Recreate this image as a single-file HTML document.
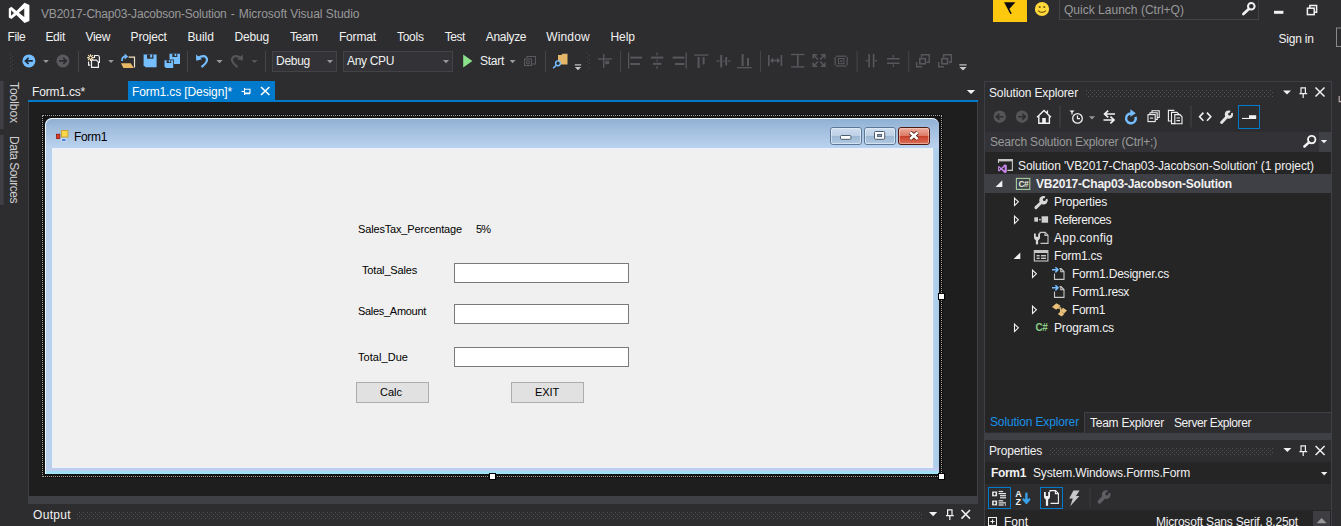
<!DOCTYPE html>
<html lang="en">
<head>
<meta charset="utf-8">
<title>VB2017-Chap03-Jacobson-Solution - Microsoft Visual Studio</title>
<style>
html,body{margin:0;padding:0;}
body{width:1341px;height:526px;overflow:hidden;background:#2d2d30;position:relative;font-family:'Liberation Sans',sans-serif;}
.a{position:absolute;}
.t{position:absolute;white-space:pre;font-family:'Liberation Sans',sans-serif;}
.grip{position:absolute;height:5px;background-image:radial-gradient(circle at 0.5px 0.5px,#505055 0.6px,transparent 0.7px),radial-gradient(circle at 2.5px 2.5px,#505055 0.6px,transparent 0.7px);background-size:4px 4px;}
svg{position:absolute;overflow:visible;}
.vt{position:absolute;white-space:pre;font-size:12px;line-height:16px;color:#d0d0d0;transform-origin:0 0;transform:rotate(90deg);}
</style>
</head>
<body>
<!-- ===== document well ===== -->
<div class="a" style="left:28px;top:100px;width:950px;height:2px;background:#007acc"></div>
<div class="a" style="left:28px;top:102px;width:950px;height:394px;background:#3f3f46"></div>
<div class="a" style="left:29px;top:102px;width:948px;height:394px;background:#1e1e1e"></div>
<div class="a" style="left:28px;top:496px;width:950px;height:8px;background:#3f3f46"></div>
<!-- active tab -->
<div class="a" style="left:128px;top:81px;width:147px;height:19px;background:#007acc"></div>

<!-- left autohide strips -->
<div class="a" style="left:0;top:81px;width:3px;height:48px;background:#3f3f46;border-right:1px solid #38383d"></div>
<div class="a" style="left:0;top:135px;width:3px;height:70px;background:#3f3f46;border-right:1px solid #38383d"></div>
<span class="vt" style="left:22px;top:82.3px;letter-spacing:-0.054px">Toolbox</span>
<span class="vt" style="left:22px;top:135.6px;letter-spacing:-0.475px">Data Sources</span>


<!-- ===== form designer ===== -->
<div class="a" id="selbg" style="left:41px;top:114px;width:902px;height:364px;background:#131313"></div>
<div class="a" id="sel" style="left:42px;top:115px;width:898px;height:360px;border:1px dotted #a6a6a6"></div>
<div class="a" id="win" style="left:45px;top:118px;width:894px;height:356px;border-radius:7px 7px 0 0;overflow:hidden;background:#b9d1ea;">
  <div class="a" style="left:0;top:0;width:894px;height:30px;background:linear-gradient(#8eafd2 0px,#93b3d5 3px,#a3bfde 12px,#adc7e5 20px,#b7d0ee 28px,#bdd4f0 30px)"></div>
  <div class="a" style="left:887px;top:30px;width:7px;height:326px;background:linear-gradient(90deg,#d3e3f3 0,#b3cfe9 2px,#a8cdea 7px)"></div>
  <div class="a" style="left:0;top:349px;width:894px;height:5px;background:#bfcdf0"></div>
  <div class="a" style="left:0;top:353px;width:894px;height:3px;background:#9fe0f4"></div>
  <div class="a" style="left:0;top:0;width:894px;height:356px;box-sizing:border-box;border-radius:7px 7px 0 0;border-top:1px solid #f6fafd;border-left:1px solid #eef5fc;"></div>
</div>
<div class="a" id="clientedge" style="left:51.5px;top:147.5px;width:881.5px;height:320px;background:#eaf3fb"></div>
<div class="a" id="client" style="left:53px;top:149px;width:879px;height:317.5px;background:#f0f0f0"></div>
<!-- textboxes -->
<div class="a" style="left:454px;top:263px;width:173px;height:18px;background:#fff;border:1px solid #7a7a7a"></div>
<div class="a" style="left:454px;top:304px;width:173px;height:18px;background:#fff;border:1px solid #7a7a7a"></div>
<div class="a" style="left:454px;top:347px;width:173px;height:18px;background:#fff;border:1px solid #7a7a7a"></div>
<!-- buttons -->
<div class="a" style="left:356px;top:382px;width:71px;height:19px;background:#e1e1e1;border:1px solid #adadad"></div>
<div class="a" style="left:511px;top:382px;width:71px;height:19px;background:#e1e1e1;border:1px solid #adadad"></div>
<!-- handles -->
<div class="a" style="left:938px;top:293px;width:5px;height:5px;background:#fff;border:1px solid #000"></div>
<div class="a" style="left:489px;top:473px;width:5px;height:5px;background:#fff;border:1px solid #000"></div>
<div class="a" style="left:938px;top:473px;width:5px;height:5px;background:#fff;border:1px solid #000"></div>

<!-- ===== output panel ===== -->

<!-- ===== top right ===== -->
<div class="a" style="left:993px;top:0;width:34px;height:22px;background:#fdc80e"></div>
<div class="a" style="left:1059px;top:-1px;width:198px;height:19px;background:#2d2d30;border:1px solid #434346"></div>

<!-- toolbar combos -->
<div class="a" style="left:272px;top:51px;width:63px;height:19px;border:1px solid #434346;background:#333337"></div>
<div class="a" style="left:343px;top:51px;width:108px;height:19px;border:1px solid #434346;background:#333337"></div>

<!-- ===== solution explorer ===== -->
<div class="a" style="left:984px;top:81px;width:348px;height:450px;background:#3f3f46"></div>
<div class="a" style="left:985px;top:82px;width:346px;height:50px;background:#2d2d30"></div>
<div class="a" style="left:985px;top:132px;width:346px;height:20px;background:#333337"></div>
<div class="a" style="left:1319px;top:132px;width:12px;height:20px;background:#3f3f46"></div>
<div class="a" style="left:985px;top:152px;width:346px;height:260px;background:#252526"></div>
<div class="a" style="left:985px;top:174px;width:346px;height:18.6px;background:#3f3f46"></div>
<!-- bottom tabs -->
<div class="a" style="left:985px;top:413px;width:346px;height:20px;background:#2d2d30"></div>
<div class="a" style="left:985px;top:412px;width:99px;height:20px;background:#252526"></div>

<div class="a" style="left:1084px;top:412px;width:247px;height:1px;background:#3f3f46"></div>
<div class="a" style="left:1084px;top:412px;width:1px;height:21px;background:#3f3f46"></div>
<!-- ===== properties ===== -->
<div class="a" style="left:985px;top:440px;width:346px;height:22px;background:#2d2d30"></div>
<div class="a" style="left:985px;top:462px;width:346px;height:22px;background:#252526"></div>
<div class="a" style="left:985px;top:484px;width:346px;height:26px;background:#2d2d30"></div>
<div class="a" style="left:985px;top:510px;width:346px;height:16px;background:#252526"></div>

<svg width="1341" height="526" viewBox="0 0 1341 526" style="left:0;top:0">
<defs>
<pattern id="gp1" x="1090" y="90" width="4" height="4" patternUnits="userSpaceOnUse"><rect x="0" y="0" width="1" height="1" fill="#535358"/><rect x="2" y="2" width="1" height="1" fill="#535358"/></pattern>
<pattern id="gp2" x="1052" y="448" width="4" height="4" patternUnits="userSpaceOnUse"><rect x="0" y="0" width="1" height="1" fill="#535358"/><rect x="2" y="2" width="1" height="1" fill="#535358"/></pattern>
<pattern id="gp3" x="83" y="512" width="4" height="4" patternUnits="userSpaceOnUse"><rect x="0" y="0" width="1" height="1" fill="#535358"/><rect x="2" y="2" width="1" height="1" fill="#535358"/></pattern>
</defs>
<rect x="1086" y="90" width="188" height="7" fill="url(#gp1)"/>
<rect x="1050" y="448" width="224" height="7" fill="url(#gp2)"/>
<rect x="77" y="512" width="846" height="7" fill="url(#gp3)"/>
</svg>
<svg width="1341" height="526" viewBox="0 0 1341 526" style="left:0;top:0">
<!-- VS logo -->
<path fill="#ffffff" fill-rule="evenodd" d="M24.5,2.85 L29.4,5.1 V21.1 L24.5,23.1 L16.4,15 L11.4,19.1 L8.8,17.4 V8.55 L11.4,6.85 L16.4,11.1Z M24.25,8.55 V17.1 L18.8,12.85Z M11.1,10.3 V15.7 L14,13Z"/>
<!-- notification flag -->
<path d="M1004.1,2.3 H1015.4 L1010,8.3 L1009.4,9 L1011.8,13.4 L1010.3,14 L1004.1,2.3Z" fill="#0b0b14"/>
<!-- smiley -->
<circle cx="1042" cy="9" r="7.1" fill="#ffd83b"/>
<circle cx="1039.7" cy="7" r="1.1" fill="#7a5a00"/>
<circle cx="1044.3" cy="7" r="1.1" fill="#7a5a00"/>
<path d="M1038,10.6 Q1042,14.2 1046,10.6" fill="none" stroke="#7a5a00" stroke-width="1.2"/>
<!-- quick launch magnifier -->
<circle cx="1251.3" cy="6.3" r="3.3" fill="none" stroke="#f1f1f1" stroke-width="2"/>
<path d="M1248.8,8.9 L1243.4,14" stroke="#f1f1f1" stroke-width="2.7" stroke-linecap="round"/>
<!-- window buttons -->
<rect x="1274" y="10.8" width="9.4" height="3" fill="#f1f1f1"/>
<g fill="none" stroke="#f1f1f1" stroke-width="1.5">
<path d="M1309.8,8 V5.6 H1316.6 V12.2 H1314.4"/>
<rect x="1307.4" y="8.2" width="6.8" height="6.4"/>
</g>
<!-- sign-in box partial -->
<rect x="1336.5" y="28" width="8" height="18.5" fill="none" stroke="#8a8a8a" stroke-width="1"/>

<!-- ===== main toolbar ===== -->
<!-- back -->
<circle cx="28.9" cy="60.9" r="6.5" fill="#75beff"/>
<path d="M32.8,60.9 H25.8 M28.6,57.8 L25.4,60.9 L28.6,64" fill="none" stroke="#1b2a3a" stroke-width="1.7"/>
<path d="M43.2,60 H48.8 L46,63Z" fill="#999"/>
<!-- forward disabled -->
<circle cx="62.9" cy="60.9" r="6.5" fill="#5a5a5e"/>
<path d="M59,60.9 H66 M63.2,57.8 L66.4,60.9 L63.2,64" fill="none" stroke="#2d2d30" stroke-width="1.7"/>
<rect x="78" y="51" width="1" height="21" fill="#46464a"/>
<!-- new project -->
<g fill="none" stroke="#f1f1f1" stroke-width="1.2">
<path d="M94.5,58 V55.5 H98 Q99.4,55.6 99.4,57.4 V62.4 H99"/>
<path d="M91.5,60.2 H96.4 L98.4,62.2 V67.4 H91.5Z"/>
<path d="M88.6,61.6 V65.2 H90.2"/>
</g>
<g stroke="#fbe7b5" stroke-width="1.1"><path d="M90.5,54.2 V61 M87.1,57.6 H93.9 M88.1,55.2 L92.9,60 M92.9,55.2 L88.1,60"/></g>
<circle cx="90.5" cy="57.6" r="1.1" fill="#2d2d30"/>
<path d="M108.2,60 H113.8 L111,63Z" fill="#999"/>
<!-- open folder -->
<path d="M121,63.2 H130.8 L133.8,68 H123.4Z" fill="#e9b866"/>
<path d="M128.6,57.2 H134.5 V67.6" fill="none" stroke="#f1e2c4" stroke-width="1.2"/>
<path d="M122,61 Q121.6,56.2 126,56.4" fill="none" stroke="#75beff" stroke-width="1.7"/>
<path d="M124.6,53.6 L128.2,56.6 L124.6,59.4Z" fill="#75beff"/>
<!-- save -->
<path d="M143.6,54.5 H156.6 V67.3 H145.6 L143.6,65.3Z" fill="#75beff"/>
<rect x="147" y="54.5" width="6.5" height="4.2" fill="#2d2d30"/>
<rect x="150.2" y="54.5" width="2" height="3" fill="#75beff"/>
<!-- save all -->
<path d="M169.5,53.8 H180 V64 H171 L169.5,62.5Z" fill="#75beff"/>
<rect x="172.3" y="53.8" width="5" height="3.2" fill="#2d2d30"/>
<rect x="174.6" y="53.8" width="1.6" height="2.3" fill="#75beff"/>
<path d="M163.7,59.5 H174 V68.5 H165.4 L163.7,66.8Z" fill="#2d2d30"/>
<path d="M164.5,60.2 H173.2 V68 H166 L164.5,66.5Z" fill="#75beff"/>
<rect x="166.6" y="60.2" width="4.6" height="2.8" fill="#2d2d30"/>
<rect x="168.8" y="60.2" width="1.5" height="2" fill="#75beff"/>
<rect x="187" y="51" width="1" height="21" fill="#46464a"/>
<!-- undo -->
<path d="M197.5,58.3 Q205,53.5 207,59 Q207.5,62.5 201.5,67" fill="none" stroke="#75beff" stroke-width="2.2"/>
<path d="M196,54.6 L196.2,60.8 L202,59.2Z" fill="#75beff"/>
<path d="M216.4,60 H222.6 L219.5,63.2Z" fill="#999"/>
<!-- redo disabled -->
<path d="M241.5,58.3 Q234,53.5 232,59 Q231.5,62.5 237.5,67" fill="none" stroke="#555558" stroke-width="2.2"/>
<path d="M243,54.6 L242.8,60.8 L237,59.2Z" fill="#555558"/>
<path d="M251.4,60 H257.6 L254.5,63.2Z" fill="#555558"/>
<rect x="265" y="51" width="1" height="21" fill="#46464a"/>
<!-- combo arrows -->
<path d="M327,60 H333 L330,63.2Z" fill="#999"/>
<path d="M443,60 H449 L446,63.2Z" fill="#999"/>
<!-- start -->
<path d="M463.2,54.6 L472.4,61 L463.2,67.5Z" fill="#8ae28a"/>
<path d="M509.6,60 H515.6 L512.6,63.2Z" fill="#999"/>
<!-- disabled browser icon -->
<g fill="none" stroke="#5a5a5e" stroke-width="1.1"><path d="M527,58 V56.5 H535.5 V64 H532"/><rect x="524.5" y="59" width="7" height="6.5"/><circle cx="528" cy="62.3" r="1.6"/></g>
<rect x="545" y="51" width="1" height="21" fill="#46464a"/>
<!-- find in files -->
<path d="M558,55 H561.5 L562.5,53.8 H567.5 V64.5 H558Z" fill="#e3b767"/>
<circle cx="558" cy="63.3" r="2.4" fill="#2d2d30" stroke="#75beff" stroke-width="1.4"/>
<path d="M556.2,65.2 L553.2,68.2" stroke="#75beff" stroke-width="1.6"/>
<!-- overflow -->
<rect x="574.8" y="64.3" width="6.4" height="1.2" fill="#c8c8c8"/>
<path d="M574.8,67 H581.2 L578,70.2Z" fill="#c8c8c8"/>
</svg>
<svg width="1341" height="526" viewBox="0 0 1341 526" style="left:0;top:0">
<!-- main toolbar gripper -->
<g fill="#46464a"><rect x="10" y="54" width="1" height="1"/><rect x="12" y="56" width="1" height="1"/><rect x="10" y="58" width="1" height="1"/><rect x="12" y="60" width="1" height="1"/><rect x="10" y="62" width="1" height="1"/><rect x="12" y="64" width="1" height="1"/><rect x="10" y="66" width="1" height="1"/><rect x="12" y="68" width="1" height="1"/><rect x="10" y="70" width="1" height="1"/></g>
<!-- layout toolbar gripper -->
<g fill="#46464a"><rect x="587" y="53" width="1" height="1"/><rect x="589" y="55" width="1" height="1"/><rect x="587" y="57" width="1" height="1"/><rect x="589" y="59" width="1" height="1"/><rect x="587" y="61" width="1" height="1"/><rect x="589" y="63" width="1" height="1"/><rect x="587" y="65" width="1" height="1"/><rect x="589" y="67" width="1" height="1"/><rect x="587" y="69" width="1" height="1"/></g>
<g fill="#58585c" stroke="none">
<!-- 1 align to grid -->
<rect x="603" y="54" width="1.4" height="14"/><rect x="598" y="58.3" width="14" height="1.4"/><rect x="605.3" y="60.8" width="3.8" height="3.4"/>
<rect x="620" y="51" width="1" height="21" fill="#46464a"/>
<!-- 2 align lefts -->
<rect x="628" y="52.5" width="1.2" height="16"/><rect x="630.3" y="56.6" width="11.7" height="2"/><rect x="630.3" y="63" width="9.5" height="2"/>
<!-- 3 align centers -->
<rect x="656.5" y="52.5" width="1.2" height="3"/><rect x="656.5" y="59.6" width="1.2" height="2"/><rect x="656.5" y="66" width="1.2" height="3"/><rect x="651" y="56.6" width="12.3" height="2"/><rect x="653" y="62.8" width="8.4" height="2"/>
<!-- 4 align rights -->
<rect x="685.6" y="52.5" width="1.2" height="16"/><rect x="672.6" y="56.6" width="11.8" height="2"/><rect x="675" y="63" width="9.4" height="2"/>
<!-- 5 align tops -->
<rect x="694" y="54.4" width="14.4" height="1.3"/><rect x="697.6" y="57" width="2" height="11"/><rect x="702.6" y="57" width="2" height="7.4"/>
<!-- 6 align middles -->
<rect x="720.2" y="55" width="2" height="12.4"/><rect x="725.2" y="57" width="2" height="8.4"/><rect x="716.6" y="60.5" width="3" height="1.2"/><rect x="723" y="60.5" width="1.6" height="1.2"/><rect x="728" y="60.5" width="2.6" height="1.2"/>
<!-- 7 align bottoms -->
<rect x="737" y="67" width="14.6" height="1.3"/><rect x="741.6" y="54" width="2" height="12"/><rect x="747" y="58" width="2" height="8"/>
<rect x="760" y="51" width="1" height="21" fill="#46464a"/>
<!-- 8 same width -->
<rect x="768" y="55" width="1.6" height="11"/><rect x="780.6" y="55" width="1.6" height="11"/><path d="M770,60.5 L773.2,57.5 V59.7 H777 V57.5 L780.2,60.5 L777,63.5 V61.3 H773.2 V63.5Z"/>
<!-- 9 same height -->
<rect x="791" y="53.8" width="13.4" height="1.4"/><rect x="791" y="66.2" width="13.4" height="1.4"/><rect x="797" y="55.2" width="1.6" height="11"/>
<!-- 10 same size -->
<path d="M812.5,54 H817 V55.5 H815 L818.5,59 L817.5,60 L814,56.5 V58.5 H812.5Z"/>
<path d="M825.6,54 H821 V55.5 H823 L819.6,59 L820.6,60 L824.2,56.5 V58.5 H825.6Z"/>
<path d="M812.5,67 H817 V65.5 H815 L818.5,62 L817.5,61 L814,64.5 V62.5 H812.5Z"/>
<path d="M825.6,67 H821 V65.5 H823 L819.6,62 L820.6,61 L824.2,64.5 V62.5 H825.6Z"/>
<!-- 11 size to grid -->
<rect x="836" y="55.6" width="10.4" height="1.2"/><rect x="836" y="65.4" width="10.4" height="1.2"/><rect x="834.6" y="57" width="1.2" height="8.2"/><rect x="846.6" y="57" width="1.2" height="8.2"/>
<rect x="838" y="58" width="6.4" height="1"/><rect x="838" y="63.2" width="6.4" height="1"/><rect x="838" y="58" width="1" height="6"/><rect x="843.4" y="58" width="1" height="6"/><rect x="840.4" y="60.2" width="1.8" height="1.8"/>
<rect x="856.6" y="51" width="1" height="21" fill="#46464a"/>
<!-- 12 horizontal spacing -->
<rect x="868.3" y="54" width="1.6" height="13.4"/><rect x="872.8" y="54" width="1.6" height="13.4"/><rect x="865.6" y="60.2" width="2.4" height="1.2"/><rect x="874.6" y="60.2" width="2.4" height="1.2"/>
<!-- 13 vertical spacing -->
<rect x="887" y="58" width="12.6" height="1.5"/><rect x="887" y="62.5" width="12.6" height="1.5"/><rect x="892.7" y="55" width="1.2" height="2.6"/><rect x="892.7" y="64.4" width="1.2" height="2.6"/>
<rect x="908.2" y="51" width="1" height="21" fill="#46464a"/>
</g>
<!-- 14 bring to front / 15 send to back -->
<g fill="none" stroke="#58585c" stroke-width="1.4">
<path d="M921.5,57.5 V54.8 H929.2 V62.3 H926.7"/><rect x="919.8" y="58.6" width="5.6" height="5.2" stroke-width="1.6"/><path d="M916.6,62 V66.8 H922"/>
<path d="M943.6,57.5 V54.8 H951.3 V62.3 H948.8"/><rect x="941.9" y="58.6" width="5.6" height="5.2" stroke-width="1.6"/><path d="M938.7,62 V66.8 H944.1"/>
</g>
<rect x="959.4" y="64.3" width="7.2" height="1.2" fill="#c8c8c8"/>
<path d="M959.4,67 H966.6 L963,70.6Z" fill="#c8c8c8"/>

<!-- tab strip: pin, close, dropdown -->
<g fill="none" stroke="#ffffff" stroke-width="1.1"><path d="M241.5,91.5 H244.5 M244.5,88 V95 M244.5,89.2 H250 V93 H244.5 M244.5,93.6 H250"/></g>
<path d="M261,87 L269.4,95 M269.4,87 L261,95" stroke="#ffffff" stroke-width="1.6"/>
<path d="M966.8,90 H975.2 L971,94Z" fill="#f1f1f1"/>

<!-- output header glyphs -->
<path d="M929,512 H937.2 L933.1,516.2Z" fill="#f1f1f1"/>
<g fill="none" stroke="#f1f1f1" stroke-width="1.2"><path d="M947.6,509.5 V515.5 M952,509.5 V515.5 M947,509.8 H952.6 M946,515.6 H953.8 M949.8,515.6 V520"/></g>
<path d="M961.5,510 L970,518.6 M970,510 L961.5,518.6" stroke="#f1f1f1" stroke-width="1.5"/>
</svg>
<svg width="1341" height="526" viewBox="0 0 1341 526" style="left:0;top:0">
<!-- SE header glyphs -->
<path d="M1283,90.5 H1291 L1287,94.5Z" fill="#f1f1f1"/>
<g fill="none" stroke="#f1f1f1" stroke-width="1.2"><path d="M1301,87.5 V93.5 M1305.4,87.5 V93.5 M1300.4,87.8 H1306 M1299.4,93.6 H1307.2 M1303.2,93.6 V98"/></g>
<path d="M1315.5,87.5 L1324.5,96.5 M1324.5,87.5 L1315.5,96.5" stroke="#f1f1f1" stroke-width="1.5"/>
<!-- SE toolbar -->
<circle cx="999.7" cy="116.7" r="6.2" fill="#555558"/>
<path d="M1003.5,116.7 H996.7 M999.4,113.8 L996.4,116.7 L999.4,119.6" fill="none" stroke="#2d2d30" stroke-width="1.6"/>
<circle cx="1022" cy="116.7" r="6.2" fill="#555558"/>
<path d="M1018.2,116.7 H1025 M1022.3,113.8 L1025.3,116.7 L1022.3,119.6" fill="none" stroke="#2d2d30" stroke-width="1.6"/>
<!-- home -->
<g fill="none" stroke="#f1f1f1" stroke-width="1.4"><path d="M1037,117.2 L1044,110.5 L1051,117.2 M1038.8,116 V123.2 H1049.4 V116 M1047.4,113 V110.4"/></g>
<rect x="1042.2" y="118" width="3.6" height="5.2" fill="#f1f1f1"/>
<rect x="1059.5" y="105.5" width="1" height="22" fill="#46464a"/>
<!-- pending changes filter: clock + funnel -->
<circle cx="1077.5" cy="118.4" r="4.8" fill="none" stroke="#f1f1f1" stroke-width="1.3"/>
<path d="M1077.5,115.6 V118.6 H1080" fill="none" stroke="#f1f1f1" stroke-width="1.2"/>
<path d="M1069.5,110.4 H1074.5 L1072.6,112.4 V114.6 H1071.4 V112.4Z" fill="#f1f1f1"/>
<path d="M1089,116.3 H1095 L1092,119.5Z" fill="#999"/>
<!-- sync -->
<g fill="none" stroke="#f1f1f1" stroke-width="1.7"><path d="M1115,114 H1104.6 M1108.2,110.6 L1104.6,114 L1108.2,117.4 M1103.5,120 H1114 M1110.4,116.6 L1114,120 L1110.4,123.4"/></g>
<!-- refresh -->
<path d="M1130.9,113.55 A4.85,4.85 0 1 0 1135.5,116.8" fill="none" stroke="#75beff" stroke-width="2.5"/>
<path d="M1130.4,109.3 L1135.8,113.2 L1130.4,116.8Z" fill="#75beff"/>
<!-- collapse all -->
<g fill="none" stroke="#f1f1f1" stroke-width="1.1"><path d="M1152,112.2 V110.8 H1159.2 V117.5 H1157.6 M1150,114.2 V112.8 H1157.2 V119.5 H1155.6"/><rect x="1148" y="114.6" width="7.2" height="7"/><path d="M1150,118.1 H1153.2"/></g>
<!-- show all files -->
<g fill="none" stroke="#f1f1f1" stroke-width="1.1"><path d="M1171.5,121 H1168.4 V110.4 H1174.4"/><path d="M1174.8,123.6 H1171.5 V112.4 H1177 L1179.6,115"/><path d="M1174.8,114.6 H1180 L1182,116.8 V123.8 H1174.8Z M1176.5,118 H1180 M1176.5,120.6 H1180"/></g>
<rect x="1190.5" y="105.5" width="1" height="22" fill="#46464a"/>
<!-- view code <> -->
<g fill="none" stroke="#f1f1f1" stroke-width="1.6"><path d="M1203.4,112.6 L1199.6,116.7 L1203.4,120.8 M1207,112.6 L1210.8,116.7 L1207,120.8"/></g>
<!-- wrench -->
<path d="M1227.2,116.4 L1221.6,122.4" stroke="#e4e4e4" stroke-width="2.9" stroke-linecap="round"/><circle cx="1228.9" cy="114.6" r="4.1" fill="#e4e4e4"/><path d="M1229.5,114.0 L1235.0,111.8 L1231.2,108.4Z" fill="#2d2d30"/><circle cx="1229.6" cy="113.9" r="1.5" fill="#2d2d30"/>
<!-- preview selected (active) -->
<rect x="1238.5" y="105.5" width="21" height="23" fill="#2d2d30" stroke="#007acc" stroke-width="1"/>
<rect x="1249" y="115.2" width="7.2" height="3.8" fill="#f1f1f1"/><rect x="1242" y="117.9" width="8" height="1.1" fill="#f1f1f1"/>
<!-- search icon -->
<circle cx="1311.7" cy="139.6" r="3.7" fill="none" stroke="#f1f1f1" stroke-width="1.9"/>
<path d="M1309,142.4 L1304.4,146.5" stroke="#f1f1f1" stroke-width="2.6" stroke-linecap="round"/>
<path d="M1320.8,139.9 H1327.2 L1324,143.2Z" fill="#f1f1f1"/>

<!-- ===== tree ===== -->
<!-- solution icon -->
<g fill="none" stroke="#c8c8c8" stroke-width="1.1"><path d="M998.5,163 V159.6 H1012.4 V170.4 H1007.4"/></g><rect x="998.5" y="159.6" width="13.9" height="1.8" fill="#c8c8c8"/>
<path fill="#c586e8" fill-rule="evenodd" d="M1004.71,164.30 L1006.80,165.29 L1006.80,172.32 L1004.71,173.20 L1001.25,169.64 L999.11,171.44 L998.00,170.69 L998.00,166.81 L999.11,166.06 L1001.25,167.93Z M1004.60,166.81 L1004.60,170.56 L1002.27,168.70Z M998.98,167.57 L998.98,169.95 L1000.22,168.76Z"/>
<!-- expanded arrows -->
<path d="M1002.3,180.2 V186.9 H995.6Z" fill="#f1f1f1"/>
<path d="M1020.3,252.4 V259.1 H1013.6Z" fill="#f1f1f1"/>
<!-- collapsed arrows -->
<g fill="none" stroke="#f1f1f1" stroke-width="1.1"><path d="M1014.5,198.1 L1018.4,201.79999999999998 L1014.5,205.5Z"/><path d="M1014.5,216.1 L1018.4,219.79999999999998 L1014.5,223.5Z"/><path d="M1032.5,270.1 L1036.4,273.8 L1032.5,277.5Z"/><path d="M1032.5,306.1 L1036.4,309.8 L1032.5,313.5Z"/><path d="M1014.5,324.1 L1018.4,327.8 L1014.5,331.5Z"/></g>
<!-- C# project icon -->
<rect x="1016.4" y="178.4" width="13.4" height="11" fill="none" stroke="#a9cfa2" stroke-width="1.1"/>
<!-- wrench (properties) -->
<path d="M1041.7,202.0 L1035.9,207.6" stroke="#d8d8d8" stroke-width="3.0" stroke-linecap="round"/><circle cx="1043.5" cy="200.3" r="4.2" fill="#d8d8d8"/><path d="M1044.1,199.7 L1049.8,197.8 L1046.2,194.1Z" fill="#252526"/><circle cx="1044.3" cy="199.6" r="1.5" fill="#252526"/>
<!-- references -->
<rect x="1034.3" y="217.3" width="3.7" height="4.4" fill="#d0d0d0"/><rect x="1039" y="218.9" width="1.8" height="1.4" fill="#d0d0d0"/><rect x="1041.6" y="216.3" width="6.5" height="6.4" fill="#d0d0d0"/>
<!-- app.config -->
<g fill="none" stroke="#c8c8c8" stroke-width="1.1"><path d="M1040,234 V232.4 H1045.2 L1048,235.2 V243.4 H1040.5"/><path d="M1045,232.6 V235.4 H1047.8"/></g>
<path d="M1037,244.4 V239" stroke="#d8d8d8" stroke-width="2.3"/><path d="M1034,233.6 V237.2 A3,3 0 0 0 1040,237.2 V233.6 H1038.2 V236.8 H1035.8 V233.6Z" fill="#d8d8d8"/>
<!-- form icon -->
<rect x="1034.3" y="250.6" width="13.6" height="10.4" fill="none" stroke="#c8c8c8" stroke-width="1.1"/><rect x="1034.3" y="250.6" width="13.6" height="2.4" fill="#c8c8c8"/>
<rect x="1036.6" y="255" width="3" height="1.4" fill="#c8c8c8"/><rect x="1041" y="255" width="5" height="1.4" fill="#c8c8c8"/><rect x="1036.6" y="257.6" width="3" height="1.4" fill="#c8c8c8"/><rect x="1041" y="257.6" width="5" height="1.4" fill="#c8c8c8"/>
<!-- designer.cs / resx page icons -->
<g fill="none" stroke="#c8c8c8" stroke-width="1.1"><path d="M1054.5,273.5 V279.4 H1064 V271.6 L1061,268.6 H1059.5 M1060.8,268.8 V271.8 H1063.8"/><path d="M1054.5,291.5 V297.4 H1064 V289.6 L1061,286.6 H1059.5 M1060.8,286.8 V289.8 H1063.8"/></g>
<g fill="none" stroke="#75beff" stroke-width="1.5"><path d="M1052,269.8 H1057.6 M1055.4,267.2 L1058,269.8 L1055.4,272.4"/><path d="M1052,287.8 H1057.6 M1055.4,285.2 L1058,287.8 L1055.4,290.4"/></g>
<!-- class icon -->
<g fill="#e8c07a"><path d="M1056.4,303.2 L1060.6,305.8 L1056.2,309.8 L1052,307Z"/><path d="M1063,307.8 L1067,310.4 L1064,313.6 L1060.2,311Z"/><path d="M1060.6,311.6 L1064.4,314 L1061.6,316.4 L1057.8,314Z"/></g>
<path d="M1057.4,308 H1060.6 V312.6 H1062.4" fill="none" stroke="#e8c07a" stroke-width="1.3"/>

<!-- ===== properties ===== -->
<path d="M1283.4,448 H1291.4 L1287.4,452Z" fill="#f1f1f1"/>
<g fill="none" stroke="#f1f1f1" stroke-width="1.2"><path d="M1301,445.6 V451.6 M1305.4,445.6 V451.6 M1300.4,445.9 H1306 M1299.4,451.7 H1307.2 M1303.2,451.7 V456"/></g>
<path d="M1315.6,446 L1324.6,455 M1324.6,446 L1315.6,455" stroke="#f1f1f1" stroke-width="1.5"/>
<path d="M1321,472 H1327.4 L1324.2,475.4Z" fill="#f1f1f1"/>
<!-- categorized (active) -->
<rect x="988.5" y="487.5" width="22" height="21" fill="#2d2d30" stroke="#007acc"/>
<g fill="#e8e8e8"><rect x="992.1" y="491.5" width="5" height="4.8"/><rect x="992.1" y="500.6" width="5" height="4.8"/>
<rect x="998.6" y="490.9" width="4.6" height="1.2"/><rect x="998.6" y="493" width="7.4" height="1.2"/><rect x="1000" y="495.1" width="6" height="1.2"/><rect x="1000" y="497.2" width="6" height="1.2"/>
<rect x="998.6" y="500.2" width="4.6" height="1.2"/><rect x="998.6" y="502.3" width="7.4" height="1.2"/><rect x="998.6" y="504.4" width="5" height="1.2"/><rect x="1004.8" y="504.4" width="1.2" height="1.2"/></g>
<path d="M993.2,493.9 H996 M994.6,492.5 V495.3 M993.2,503 H996 M994.6,501.6 V504.4" stroke="#2d2d30" stroke-width="1"/>
<!-- alphabetical -->
<path d="M1026.4,493.6 V502.6 M1023.6,499.4 L1026.4,502.8 L1029.2,499.4" fill="none" stroke="#3aa0e8" stroke-width="2.4" stroke-linecap="round" stroke-linejoin="round"/>
<!-- property pages (active) -->
<rect x="1040.5" y="487.5" width="22" height="21" fill="#2d2d30" stroke="#007acc"/>
<g fill="none" stroke="#f1f1f1" stroke-width="1.1"><path d="M1050,492 V490.6 H1055.6 L1058.4,493.4 V503.4 H1050.5"/><path d="M1055.4,490.8 V493.6 H1058.2"/></g>
<path d="M1047,505.8 V499" stroke="#f1f1f1" stroke-width="2.3"/><path d="M1044,492 V496.4 A3,3 0 0 0 1050,496.4 V492 H1048.2 V496 H1045.8 V492Z" fill="#f1f1f1"/>
<!-- events -->
<path d="M1073.4,490.6 H1079.6 L1076,496 H1079.4 L1070.2,506.2 L1072.8,498.6 H1069.2Z" fill="#c8c8c8"/>
<rect x="1089.6" y="488" width="1" height="20" fill="#3d3d42"/>
<!-- wrench disabled -->
<path d="M1104.4,496.5 L1099.6,501.8" stroke="#5f5f63" stroke-width="3.9" stroke-linecap="round"/><circle cx="1106.2" cy="494.6" r="4.4" fill="#5f5f63"/><path d="M1106.8,494.0 L1112.7,491.6 L1108.6,487.9Z" fill="#2d2d30"/><circle cx="1106.9" cy="493.8" r="1.6" fill="#2d2d30"/>
<!-- grid expand box -->
<rect x="988.5" y="517.5" width="8" height="8" fill="none" stroke="#f1f1f1" stroke-width="1"/><path d="M990.4,521.5 H994.6 M992.5,519.4 V523.6" stroke="#f1f1f1" stroke-width="1"/>
<!-- scrollbar -->
<rect x="1313" y="511" width="17" height="15" fill="#3e3e42"/>
<path d="M1316.6,523.2 L1321.6,518 L1326.6,523.2Z" fill="#999"/>
<path d="M1339.2,96 V101.6 H1341" fill="none" stroke="#c8b4b4" stroke-width="1.1"/>
</svg>
<svg width="1341" height="526" viewBox="0 0 1341 526" style="left:0;top:0">
<defs>
<linearGradient id="gb" x1="0" y1="0" x2="0" y2="1"><stop offset="0" stop-color="#d0def0"/><stop offset="0.48" stop-color="#bdd0e6"/><stop offset="0.5" stop-color="#9db7d3"/><stop offset="1" stop-color="#b3cae3"/></linearGradient>
<linearGradient id="gr" x1="0" y1="0" x2="0" y2="1"><stop offset="0" stop-color="#eeb3a3"/><stop offset="0.48" stop-color="#dc7a66"/><stop offset="0.5" stop-color="#c73d27"/><stop offset="1" stop-color="#dc745c"/></linearGradient>
</defs>
<!-- form icon -->
<rect x="56.5" y="134.2" width="3.3" height="4.4" fill="#e23a24" stroke="#8c1c10" stroke-width="0.8"/>
<rect x="61.5" y="130.6" width="6.4" height="6.4" fill="#fbd54a" stroke="#c79a1c" stroke-width="0.8"/>
<rect x="61.6" y="138.4" width="4.4" height="3.2" fill="#4a86dc" stroke="#d6e4f6" stroke-width="0.8"/>
<!-- caption buttons -->
<rect x="830.5" y="127.5" width="31" height="17" rx="2.5" fill="url(#gb)" stroke="#5d7896"/>
<rect x="831.5" y="128.5" width="29" height="15" rx="1.5" fill="none" stroke="#e4eef8" stroke-opacity="0.7"/>
<rect x="864.5" y="127.5" width="31" height="17" rx="2.5" fill="url(#gb)" stroke="#5d7896"/>
<rect x="865.5" y="128.5" width="29" height="15" rx="1.5" fill="none" stroke="#e4eef8" stroke-opacity="0.7"/>
<rect x="898.5" y="127.5" width="31" height="17" rx="2.5" fill="url(#gr)" stroke="#4e1a14"/>
<rect x="899.5" y="128.5" width="29" height="15" rx="1.5" fill="none" stroke="#f6cfc4" stroke-opacity="0.6"/>
<rect x="840.5" y="135.5" width="10.4" height="3.8" rx="1" fill="#ffffff" stroke="#4a5a70"/>
<rect x="874.5" y="131.5" width="10.2" height="7.8" rx="1" fill="#ffffff" stroke="#4a5a70"/>
<rect x="877.6" y="134.4" width="4" height="2.2" fill="#8a9ab0" stroke="#4a5a70" stroke-width="0.9"/>
<path d="M910.2,132.4 L917.6,139 M917.6,132.4 L910.2,139" stroke="#5a2018" stroke-width="4.2"/>
<path d="M910.2,132.4 L917.6,139 M917.6,132.4 L910.2,139" stroke="#ffffff" stroke-width="2.6"/>
</svg>

<span class="t" style="left:41px;top:5.5px;font-size:12px;line-height:16px;font-weight:400;color:#999999;letter-spacing:-0.189px;">VB2017-Chap03-Jacobson-Solution</span>
<span class="t" style="left:230.8px;top:5.5px;font-size:12px;line-height:16px;font-weight:400;color:#999999;letter-spacing:-0.400px;">-</span>
<span class="t" style="left:238.7px;top:5.5px;font-size:12px;line-height:16px;font-weight:400;color:#999999;letter-spacing:-0.045px;">Microsoft Visual Studio</span>
<span class="t" style="left:7.5px;top:29.0px;font-size:12px;line-height:16px;font-weight:400;color:#f1f1f1;letter-spacing:-0.411px;">File</span>
<span class="t" style="left:45.4px;top:29.0px;font-size:12px;line-height:16px;font-weight:400;color:#f1f1f1;letter-spacing:-0.272px;">Edit</span>
<span class="t" style="left:85.5px;top:29.0px;font-size:12px;line-height:16px;font-weight:400;color:#f1f1f1;letter-spacing:-0.324px;">View</span>
<span class="t" style="left:130.6px;top:29.0px;font-size:12px;line-height:16px;font-weight:400;color:#f1f1f1;letter-spacing:-0.166px;">Project</span>
<span class="t" style="left:187.4px;top:29.0px;font-size:12px;line-height:16px;font-weight:400;color:#f1f1f1;letter-spacing:-0.037px;">Build</span>
<span class="t" style="left:234.4px;top:29.0px;font-size:12px;line-height:16px;font-weight:400;color:#f1f1f1;letter-spacing:-0.175px;">Debug</span>
<span class="t" style="left:290px;top:29.0px;font-size:12px;line-height:16px;font-weight:400;color:#f1f1f1;letter-spacing:-0.436px;">Team</span>
<span class="t" style="left:338.9px;top:29.0px;font-size:12px;line-height:16px;font-weight:400;color:#f1f1f1;letter-spacing:-0.153px;">Format</span>
<span class="t" style="left:396.9px;top:29.0px;font-size:12px;line-height:16px;font-weight:400;color:#f1f1f1;letter-spacing:-0.243px;">Tools</span>
<span class="t" style="left:444.7px;top:29.0px;font-size:12px;line-height:16px;font-weight:400;color:#f1f1f1;letter-spacing:-0.479px;">Test</span>
<span class="t" style="left:485.8px;top:29.0px;font-size:12px;line-height:16px;font-weight:400;color:#f1f1f1;letter-spacing:-0.329px;">Analyze</span>
<span class="t" style="left:546.2px;top:29.0px;font-size:12px;line-height:16px;font-weight:400;color:#f1f1f1;letter-spacing:0.152px;">Window</span>
<span class="t" style="left:610.5px;top:29.0px;font-size:12px;line-height:16px;font-weight:400;color:#f1f1f1;letter-spacing:-0.072px;">Help</span>
<span class="t" style="left:1278.5px;top:30.5px;font-size:12px;line-height:16px;font-weight:400;color:#f1f1f1;letter-spacing:-0.200px;">Sign in</span>
<span class="t" style="left:1064px;top:1.5px;font-size:12px;line-height:16px;font-weight:400;color:#999999;letter-spacing:0.013px;">Quick Launch (Ctrl+Q)</span>
<span class="t" style="left:276px;top:53.0px;font-size:12px;line-height:16px;font-weight:400;color:#f1f1f1;letter-spacing:-0.275px;">Debug</span>
<span class="t" style="left:347px;top:53.0px;font-size:12px;line-height:16px;font-weight:400;color:#f1f1f1;letter-spacing:-0.337px;">Any CPU</span>
<span class="t" style="left:480px;top:53.0px;font-size:12px;line-height:16px;font-weight:400;color:#f1f1f1;letter-spacing:-0.269px;">Start</span>
<span class="t" style="left:32px;top:83.5px;font-size:12px;line-height:16px;font-weight:400;color:#f1f1f1;letter-spacing:-0.188px;">Form1.cs*</span>
<span class="t" style="left:132px;top:83.5px;font-size:12px;line-height:16px;font-weight:400;color:#ffffff;letter-spacing:-0.113px;">Form1.cs [Design]*</span>
<span class="t" style="left:989px;top:84.5px;font-size:12px;line-height:16px;font-weight:400;color:#f1f1f1;letter-spacing:-0.141px;">Solution Explorer</span>
<span class="t" style="left:990px;top:133.5px;font-size:12px;line-height:16px;font-weight:400;color:#999999;letter-spacing:-0.184px;">Search Solution Explorer (Ctrl+;)</span>
<span class="t" style="left:1018px;top:157.5px;font-size:12px;line-height:16px;font-weight:400;color:#f1f1f1;letter-spacing:-0.076px;">Solution &#x27;VB2017-Chap03-Jacobson-Solution&#x27; (1 project)</span>
<span class="t" style="left:1036px;top:175.5px;font-size:12px;line-height:16px;font-weight:700;color:#f1f1f1;letter-spacing:-0.217px;">VB2017-Chap03-Jacobson-Solution</span>
<span class="t" style="left:1054px;top:193.5px;font-size:12px;line-height:16px;font-weight:400;color:#f1f1f1;letter-spacing:-0.170px;">Properties</span>
<span class="t" style="left:1054px;top:211.5px;font-size:12px;line-height:16px;font-weight:400;color:#f1f1f1;letter-spacing:-0.438px;">References</span>
<span class="t" style="left:1054px;top:229.5px;font-size:12px;line-height:16px;font-weight:400;color:#f1f1f1;letter-spacing:0.228px;">App.config</span>
<span class="t" style="left:1054px;top:247.5px;font-size:12px;line-height:16px;font-weight:400;color:#f1f1f1;letter-spacing:-0.252px;">Form1.cs</span>
<span class="t" style="left:1072px;top:265.5px;font-size:12px;line-height:16px;font-weight:400;color:#f1f1f1;letter-spacing:-0.218px;">Form1.Designer.cs</span>
<span class="t" style="left:1072px;top:283.5px;font-size:12px;line-height:16px;font-weight:400;color:#f1f1f1;letter-spacing:-0.369px;">Form1.resx</span>
<span class="t" style="left:1072px;top:301.5px;font-size:12px;line-height:16px;font-weight:400;color:#f1f1f1;letter-spacing:-0.334px;">Form1</span>
<span class="t" style="left:1054px;top:319.5px;font-size:12px;line-height:16px;font-weight:400;color:#f1f1f1;letter-spacing:-0.136px;">Program.cs</span>
<span class="t" style="left:990px;top:414.0px;font-size:12px;line-height:16px;font-weight:400;color:#1991e6;letter-spacing:-0.141px;">Solution Explorer</span>
<span class="t" style="left:1090px;top:414.5px;font-size:12px;line-height:16px;font-weight:400;color:#f1f1f1;letter-spacing:-0.260px;">Team Explorer</span>
<span class="t" style="left:1174px;top:414.5px;font-size:12px;line-height:16px;font-weight:400;color:#f1f1f1;letter-spacing:-0.425px;">Server Explorer</span>
<span class="t" style="left:989px;top:442.5px;font-size:12px;line-height:16px;font-weight:400;color:#f1f1f1;letter-spacing:-0.170px;">Properties</span>
<span class="t" style="left:991px;top:465.0px;font-size:12px;line-height:16px;font-weight:700;color:#f1f1f1;letter-spacing:-0.338px;">Form1</span>
<span class="t" style="left:1033px;top:465.0px;font-size:12px;line-height:16px;font-weight:400;color:#f1f1f1;letter-spacing:-0.147px;">System.Windows.Forms.Form</span>
<span class="t" style="left:1004px;top:513.5px;font-size:12px;line-height:16px;font-weight:400;color:#f1f1f1;letter-spacing:-0.004px;">Font</span>
<span class="t" style="left:1156px;top:513.5px;font-size:12px;line-height:16px;font-weight:400;color:#f1f1f1;letter-spacing:-0.193px;">Microsoft Sans Serif, 8.25pt</span>
<span class="t" style="left:33px;top:507.0px;font-size:12px;line-height:16px;font-weight:400;color:#f1f1f1;letter-spacing:0.328px;">Output</span>
<span class="t" style="left:74px;top:128.5px;font-size:12px;line-height:16px;font-weight:400;color:#000000;letter-spacing:-0.334px;">Form1</span>
<span class="t" style="left:358px;top:221.5px;font-size:11px;line-height:15px;font-weight:400;color:#000000;letter-spacing:-0.159px;">SalesTax_Percentage</span>
<span class="t" style="left:476px;top:221.5px;font-size:11px;line-height:15px;font-weight:400;color:#000000;letter-spacing:-0.953px;">5%</span>
<span class="t" style="left:362px;top:262.5px;font-size:11px;line-height:15px;font-weight:400;color:#000000;letter-spacing:-0.170px;">Total_Sales</span>
<span class="t" style="left:358px;top:303.5px;font-size:11px;line-height:15px;font-weight:400;color:#000000;letter-spacing:-0.296px;">Sales_Amount</span>
<span class="t" style="left:358px;top:349.5px;font-size:11px;line-height:15px;font-weight:400;color:#000000;letter-spacing:0.050px;">Total_Due</span>
<span class="t" style="left:380px;top:385.0px;font-size:11px;line-height:15px;font-weight:400;color:#000000;letter-spacing:-0.004px;">Calc</span>
<span class="t" style="left:535px;top:385.0px;font-size:11px;line-height:15px;font-weight:400;color:#000000;letter-spacing:-0.113px;">EXIT</span>
<span class="t" style="left:1018.6px;top:177.8px;font-size:8.5px;line-height:12.5px;font-weight:700;color:#e4f0de;letter-spacing:-0.637px;">C#</span>
<span class="t" style="left:1035.6px;top:320.6px;font-size:10px;line-height:14px;font-weight:700;color:#8bcf85;letter-spacing:-0.598px;">C#</span>
<span class="t" style="left:1015.2px;top:488.1px;font-size:9px;line-height:13px;font-weight:700;color:#f1f1f1;letter-spacing:-0.300px;">A</span>
<span class="t" style="left:1015.6px;top:496.0px;font-size:9px;line-height:13px;font-weight:700;color:#f1f1f1;letter-spacing:0.100px;">Z</span>
</body>
</html>
